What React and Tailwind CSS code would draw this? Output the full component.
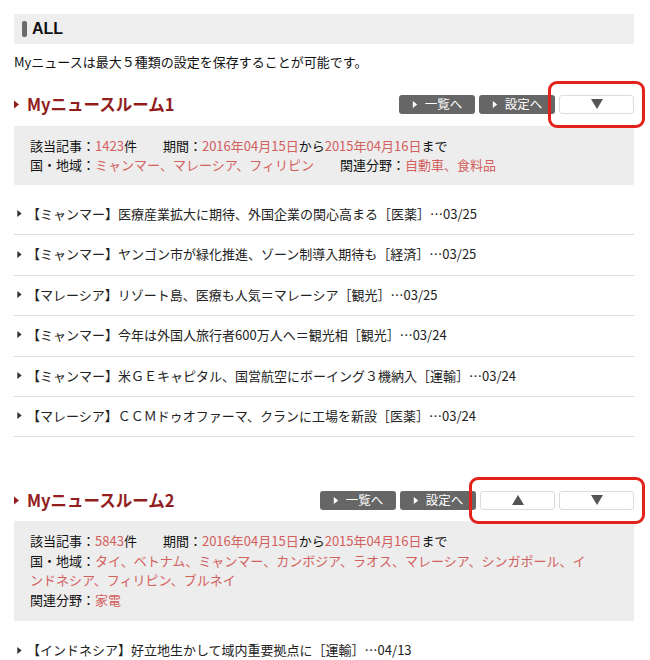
import React from 'react';

const jp = { fontFamily: '"Noto Sans CJK JP", "Noto Sans", sans-serif' };

const R = ({ children }) => <span className="text-[#d2605d]">{children}</span>;

const Tri = ({ className }) => (
  <svg width="5" height="8" viewBox="0 0 5 8" className={className}>
    <path d="M0 0 L5 4 L0 8 Z" fill="currentColor" />
  </svg>
);

const Btn = ({ label }) => (
  <button className="flex h-[19px] w-[76px] items-center justify-center gap-[7px] rounded-[3px] bg-[#666666] text-[12.5px] leading-none text-white">
    <Tri className="h-[7px] w-[6px] text-white" />
    <span>{label}</span>
  </button>
);

const Arrow = ({ up }) => (
  <button className="flex h-[19px] w-[75px] items-center justify-center rounded-[3px] border border-[#dcdcdc] bg-white">
    <svg width="12" height="10" viewBox="0 0 12 10">
      <path d={up ? 'M6 0 L12 10 L0 10 Z' : 'M0 0 L12 0 L6 10 Z'} fill="#555555" />
    </svg>
  </button>
);

const RoomHeader = ({ title, up }) => (
  <div className="flex h-[30px] items-center justify-between">
    <h2 className="flex items-center gap-[8px] text-[16.5px] font-bold text-[#921d1d]">
      <Tri className="h-[9px] w-[5px] text-[#921d1d]" />
      {title}
    </h2>
    <div className="flex items-center gap-[4px]">
      <Btn label="一覧へ" />
      <Btn label="設定へ" />
      <div className="relative flex gap-[4px]">
        {up && <Arrow up />}
        <Arrow />
        <span className="pointer-events-none absolute -bottom-[14px] -left-[11px] -right-[11px] -top-[14px] rounded-[9px] border-[3px] border-[#e3221c]" />
      </div>
    </div>
  </div>
);

const NewsList = ({ items }) => (
  <ul className="mt-[10px]">
    {items.map((t, i) => (
      <li
        key={i}
        className="flex h-[40.4px] items-center gap-[5px] border-b border-[#dddddd] pb-[2px] pl-[3px] text-[13px] text-[#222222]"
      >
        <Tri className="h-[7px] w-[5px] text-[#333333]" />
        <span>{t}</span>
      </li>
    ))}
  </ul>
);

const room1News = [
  '【ミャンマー】医療産業拡大に期待、外国企業の関心高まる［医薬］…03/25',
  '【ミャンマー】ヤンゴン市が緑化推進、ゾーン制導入期待も［経済］…03/25',
  '【マレーシア】リゾート島、医療も人気＝マレーシア［観光］…03/25',
  '【ミャンマー】今年は外国人旅行者600万人へ＝観光相［観光］…03/24',
  '【ミャンマー】米ＧＥキャピタル、国営航空にボーイング３機納入［運輸］…03/24',
  '【マレーシア】ＣＣＭドゥオファーマ、クランに工場を新設［医薬］…03/24',
];

const room2News = ['【インドネシア】好立地生かして域内重要拠点に［運輸］…04/13'];

export default function App() {
  return (
    <div className="ml-[14px] w-[620px] bg-white pt-[14px] text-[#111111]" style={jp}>
      <div className="flex h-[30px] items-center gap-[5px] bg-[#efeeee] pl-[8px]">
        <span className="h-[16px] w-[5px] rounded-[2px] bg-[#6b6b6b]" />
        <span className="text-[16px] font-bold" style={{ fontFamily: '"Liberation Sans", Arial, sans-serif' }}>
          ALL
        </span>
      </div>
      <p className="mt-[9px] text-[13px] leading-[18px]">Myニュースは最大５種類の設定を保存することが可能です。</p>

      <div className="mt-[18px]">
        <RoomHeader title="Myニュースルーム1" />
        <div className="mt-[7px] bg-[#eeeded] pb-[11px] pl-[16px] pt-[10px] text-[13px] leading-[19px]">
          <div>
            該当記事：<R>1423</R>件<span className="inline-block w-[26px]" />期間：<R>2016年04月15日</R>から<R>2015年04月16日</R>まで
          </div>
          <div>
            国・地域：<R>ミャンマー、マレーシア、フィリピン</R>
            <span className="inline-block w-[26px]" />関連分野：<R>自動車、食料品</R>
          </div>
        </div>
        <NewsList items={room1News} />
      </div>

      <div className="mt-[48px]">
        <RoomHeader title="Myニュースルーム2" up />
        <div className="mt-[6px] bg-[#eeeded] pb-[12px] pl-[16px] pt-[10px] text-[13px] leading-[19.5px]">
          <div>
            該当記事：<R>5843</R>件<span className="inline-block w-[26px]" />期間：<R>2016年04月15日</R>から<R>2015年04月16日</R>まで
          </div>
          <div className="whitespace-nowrap">
            国・地域：<R>タイ、ベトナム、ミャンマー、カンボジア、ラオス、マレーシア、シンガポール、イ</R>
          </div>
          <div>
            <R>ンドネシア、フィリピン、ブルネイ</R>
          </div>
          <div>
            関連分野：<R>家電</R>
          </div>
        </div>
        <NewsList items={room2News} />
      </div>
    </div>
  );
}
